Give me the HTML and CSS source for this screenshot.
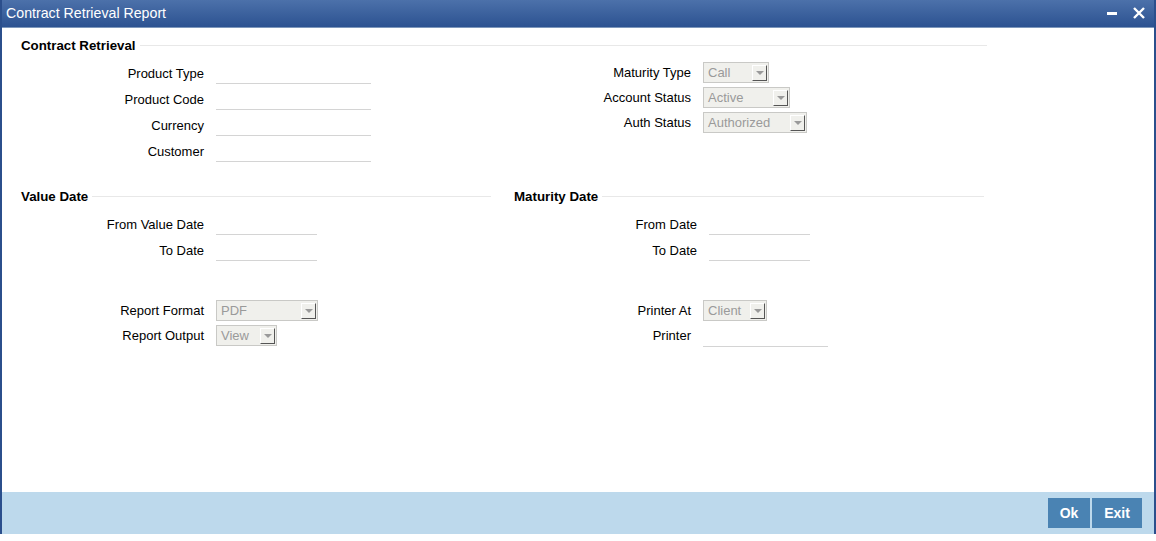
FILE: index.html
```html
<!DOCTYPE html>
<html lang="en">
<head>
  <meta charset="UTF-8">
  <title>Contract Retrieval Report</title>
  <link rel="stylesheet" href="styles.css">
</head>
<body>
  <div class="window">
    <div class="titlebar">
      <span class="title">Contract Retrieval Report</span>
      <div class="win-buttons">
        <svg width="12" height="12" viewBox="0 0 12 12"><rect x="1" y="5" width="10" height="3" fill="#fff"/></svg>
        <svg width="14" height="14" viewBox="0 0 14 14"><path d="M2 2 L12 12 M12 2 L2 12" stroke="#fff" stroke-width="2.4"/></svg>
      </div>
    </div>

    <div class="content">
      <div class="legend legend-wide">Contract Retrieval</div>

      <div class="block">
        <div class="col col-left">
          <div class="row"><label>Product Type</label><input class="text w155"></div>
          <div class="row"><label>Product Code</label><input class="text w155"></div>
          <div class="row"><label>Currency</label><input class="text w155"></div>
          <div class="row"><label>Customer</label><input class="text w155"></div>
        </div>
        <div class="col col-right">
          <div class="row short"><label>Maturity Type</label><div class="select w66"><span>Call</span><i class="arrow"></i></div></div>
          <div class="row short"><label>Account Status</label><div class="select w87"><span>Active</span><i class="arrow"></i></div></div>
          <div class="row short"><label>Auth Status</label><div class="select w104"><span>Authorized</span><i class="arrow"></i></div></div>
        </div>
      </div>

      <div class="block dates">
        <div class="datecol">
          <div class="legend">Value Date</div>
          <div class="row"><label>From Value Date</label><input class="text w101"></div>
          <div class="row"><label>To Date</label><input class="text w101"></div>
        </div>
        <div class="datecol datecol-right">
          <div class="legend">Maturity Date</div>
          <div class="row"><label>From Date</label><input class="text w101"></div>
          <div class="row"><label>To Date</label><input class="text w101"></div>
        </div>
      </div>

      <div class="block report">
        <div class="col col-left">
          <div class="row short"><label>Report Format</label><div class="select w102"><span>PDF</span><i class="arrow"></i></div></div>
          <div class="row short"><label>Report Output</label><div class="select w61"><span>View</span><i class="arrow"></i></div></div>
        </div>
        <div class="col col-right">
          <div class="row short"><label>Printer At</label><div class="select w64"><span>Client</span><i class="arrow"></i></div></div>
          <div class="row short"><label>Printer</label><input class="text w125"></div>
        </div>
      </div>
    </div>

    <div class="footer">
      <button>Ok</button>
      <button class="exit">Exit</button>
    </div>
  </div>
</body>
</html>
```

FILE: styles.css
```css
body {
  margin: 0;
  background: #ffffff;
  font-family: 'Liberation Sans', Arial, sans-serif;
  font-size: 13px;
  color: #000;
}

.window {
  height: 534px;
  display: flex;
  flex-direction: column;
  border-left: 2px solid #2b4f8c;
  border-right: 2px solid #2b4f8c;
  box-sizing: border-box;
}

.titlebar {
  height: 28px;
  box-sizing: border-box;
  background: linear-gradient(#4c71aa, #2c5291);
  border-bottom: 1px solid #7d97bb;
  display: flex;
  align-items: center;
  justify-content: space-between;
  padding: 0 8px 0 4px;
}

.title {
  color: #fff;
  font-size: 14.2px;
  margin-top: -1px;
}

.win-buttons {
  display: flex;
  align-items: center;
  gap: 14px;
  margin-top: -2px;
}

.content {
  flex: 1;
  padding: 9px 0 0 19px;
}

.legend {
  display: flex;
  align-items: center;
  gap: 4px;
  height: 16px;
  font-weight: bold;
  font-size: 13.3px;
}

.legend::after {
  content: '';
  flex: 1;
  border-top: 1px solid #e8e8e8;
}

.legend-wide {
  width: 966px;
}

.block {
  display: flex;
  margin-top: 7px;
}

.col-left {
  width: 470px;
}

.col-right {
  width: 500px;
}

.col-left label {
  width: 183px;
}

.col-right label {
  width: 200px;
}

.row {
  height: 26px;
  display: flex;
  align-items: center;
  gap: 12px;
}

.row.short {
  height: 25px;
}

label {
  text-align: right;
  flex-shrink: 0;
}

input.text {
  height: 22px;
  box-sizing: border-box;
  border: none;
  border-bottom: 1px solid #d4d4d4;
  background: transparent;
  padding: 0;
}

.w155 { width: 155px; }
.w101 { width: 101px; }
.w125 { width: 125px; }
.w66 { width: 66px; }
.w87 { width: 87px; }
.w104 { width: 104px; }
.w102 { width: 102px; }
.w61 { width: 61px; }
.w64 { width: 64px; }

.select {
  height: 21px;
  box-sizing: border-box;
  border: 1px solid #c9c9c6;
  background: #f0f0ec;
  display: flex;
  align-items: center;
  justify-content: space-between;
  padding: 1px 1px 1px 4px;
  color: #9a9a9a;
}

.arrow {
  width: 15px;
  height: 16px;
  box-sizing: border-box;
  background: #f0f0ec;
  border-top: 1px solid #fff;
  border-left: 1px solid #fff;
  border-right: 1px solid #555;
  border-bottom: 1px solid #555;
  position: relative;
}

.arrow::after {
  content: '';
  position: absolute;
  left: 3px;
  top: 5px;
  border-left: 4px solid transparent;
  border-right: 4px solid transparent;
  border-top: 4px solid #9a9a9a;
}

.dates {
  margin-top: 24px;
}

.datecol {
  width: 470px;
}

.datecol-right {
  margin-left: 23px;
}

.datecol .legend {
  margin-bottom: 7px;
}

.datecol label {
  width: 183px;
}

.report {
  margin-top: 35px;
}

.footer {
  height: 42px;
  background: #bdd9ec;
  display: flex;
  align-items: center;
  justify-content: flex-end;
  gap: 2px;
  padding-right: 12px;
}

button {
  height: 30px;
  width: 42px;
  border: none;
  background: #4a83b3;
  color: #fff;
  font-family: 'Liberation Sans', Arial, sans-serif;
  font-size: 14px;
  font-weight: bold;
  cursor: pointer;
}

button.exit {
  width: 50px;
}
```
